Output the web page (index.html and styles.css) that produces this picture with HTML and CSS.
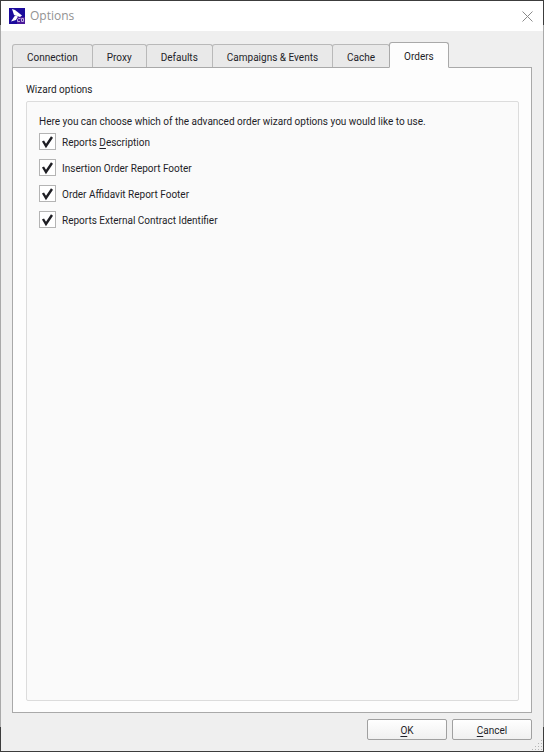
FILE: index.html
```html
<!DOCTYPE html>
<html lang="en">
<head>
  <meta charset="UTF-8">
  <meta name="viewport" content="width=device-width, initial-scale=1.0">
  <title>Options</title>
  <link rel="stylesheet" href="styles.css">
</head>
<body>
<div class="dialog">
  <header class="title-bar">
    <svg class="app-icon" viewBox="0 0 16 16" aria-hidden="true">
      <rect width="16" height="16" fill="#1b0a9c"/>
      <rect x="8" y="9" width="8" height="7" fill="#4a1a9a"/>
      <path d="M3 1L6 2L13 7.500L11 9L5 7Z" fill="#fff"/>
      <path d="M2 13.500L6 7.500L9 8.500L7 12Z" fill="#fff"/>
      <path d="M11.500 10.500H9.500L8.500 11.500V13.500H11M12.500 10.500H14.500V13.500H12.500Z" fill="none" stroke="#b9a8e0"/>
    </svg>
    <h1>Options</h1>
    <button class="close-btn" aria-label="Close">
      <svg viewBox="0 0 11 11"><path d="M.5 .5L10.500 10.500M10.500 .5L.5 10.500" fill="none" stroke="#8a8a8a"/></svg>
    </button>
  </header>

  <main class="content">
    <div class="tabs" role="tablist">
      <button class="tab" role="tab">Connection</button>
      <button class="tab" role="tab">Proxy</button>
      <button class="tab" role="tab">Defaults</button>
      <button class="tab" role="tab">Campaigns &amp; Events</button>
      <button class="tab" role="tab">Cache</button>
      <button class="tab active" role="tab" aria-selected="true">Orders</button>
    </div>

    <section class="panel" role="tabpanel">
      <h2>Wizard options</h2>
      <div class="group">
        <p>Here you can choose which of the advanced order wizard options you would like to use.</p>
        <label class="option"><input type="checkbox" checked><span>Reports <u>D</u>escription</span></label>
        <label class="option"><input type="checkbox" checked><span>Insertion Order Report Footer</span></label>
        <label class="option"><input type="checkbox" checked><span>Order Affidavit Report Footer</span></label>
        <label class="option"><input type="checkbox" checked><span>Reports External Contract Identifier</span></label>
      </div>
    </section>
  </main>

  <footer class="actions">
    <button class="btn"><u>O</u>K</button>
    <button class="btn"><u>C</u>ancel</button>
    <svg class="grip" viewBox="0 0 11 11" aria-hidden="true">
      <path d="M9 0h1v1h-1zM6 3h1v1h-1zM9 3h1v1h-1zM3 6h1v1h-1zM6 6h1v1h-1zM9 6h1v1h-1zM0 9h1v1h-1zM3 9h1v1h-1zM6 9h1v1h-1zM9 9h1v1h-1z" fill="#b4b4b4"/>
    </svg>
  </footer>
</div>
</body>
</html>
```

FILE: styles.css
```css
:root {
  --edge-dark: #3c3c3c;
  --edge-light: #a9a9a9;
  --window-bg: #efefef;
  --border: #a9a9a9;
  --text-color: #1e1e28;
}

* { margin: 0; padding: 0; box-sizing: border-box; }

body {
  font-family: Roboto, "Open Sans", sans-serif;
  font-size: 10px;
  line-height: 16px;
  color: var(--text-color);
  background: linear-gradient(var(--edge-dark) 25px, var(--edge-light) 25px, var(--edge-light) calc(100% - 25px), var(--edge-dark) calc(100% - 25px));
}

button {
  font: inherit;
  color: inherit;
}

u {
  text-underline-offset: 2px;
}

/* the 1px padding lets the window edge show through */
.dialog {
  display: flex;
  flex-direction: column;
  min-height: 100vh;
  padding: 1px;
  background: linear-gradient(var(--window-bg), var(--window-bg)) content-box;
}

.title-bar {
  display: flex;
  align-items: center;
  height: 30px;
  padding: 0 10px 0 8px;
  background: #fff;
}
.title-bar h1 {
  flex: 1;
  margin-left: 5px;
  font-family: "Open Sans", sans-serif;
  font-size: 12px;
  font-weight: normal;
  color: #929292;
}
.app-icon {
  width: 16px;
  height: 16px;
}
.close-btn {
  width: 11px;
  height: 11px;
  border: none;
  background: none;
}
.close-btn svg { display: block; }

.content {
  flex: 1;
  display: flex;
  flex-direction: column;
  padding: 11px 11px 0;
}

.tabs {
  display: flex;
  align-items: flex-end;
  margin-bottom: -1px;
}
.tab {
  height: 24px;
  padding: 4px 14px 0;
  border: 1px solid #b9b9b9;
  border-bottom-color: var(--border);
  border-radius: 3px 3px 0 0;
  background: #e9e9e9;
}
.tab + .tab { margin-left: -1px; }
.tab.active {
  z-index: 1;
  height: 26px;
  border-color: var(--border);
  border-bottom-color: #fdfdfd;
  background: #fdfdfd;
}

.panel {
  flex: 1;
  display: flex;
  flex-direction: column;
  padding: 14px 12px 11px 13px;
  border: 1px solid var(--border);
  background: #fdfdfd;
}
.panel h2 {
  margin-bottom: 3px;
  font-size: 10px;
  font-weight: normal;
}
.group {
  flex: 1;
  padding: 12px;
  border: 1px solid #dcdcdc;
  border-radius: 2px;
  background: #fafafa;
}
.group p { margin-bottom: 3px; }

.option {
  display: flex;
  align-items: center;
  gap: 6px;
  width: fit-content;
  height: 17px;
  margin-bottom: 9px;
}
.option span { padding-top: 2px; }
.option input {
  appearance: none;
  width: 17px;
  height: 17px;
  border: 1px solid #b4b4b4;
  background: #fff;
}
.option input:checked {
  background: #fff url("data:image/svg+xml,%3Csvg xmlns='http://www.w3.org/2000/svg' viewBox='0 0 15 15'%3E%3Cpath d='M3 7L6 12L12 3' fill='none' stroke='%231e1e24' stroke-width='2.400'/%3E%3C/svg%3E") center / 15px;
}

.actions {
  position: relative;
  display: flex;
  justify-content: flex-end;
  gap: 5px;
  padding: 6px 11px 11px;
}
.btn {
  width: 80px;
  height: 21px;
  padding-top: 2px;
  border: 1px solid #a0a0a0;
  border-radius: 2px;
  background: linear-gradient(#fff, #f0f0f0);
}
.grip {
  position: absolute;
  right: 0;
  bottom: 0;
  width: 11px;
  height: 11px;
}
```
